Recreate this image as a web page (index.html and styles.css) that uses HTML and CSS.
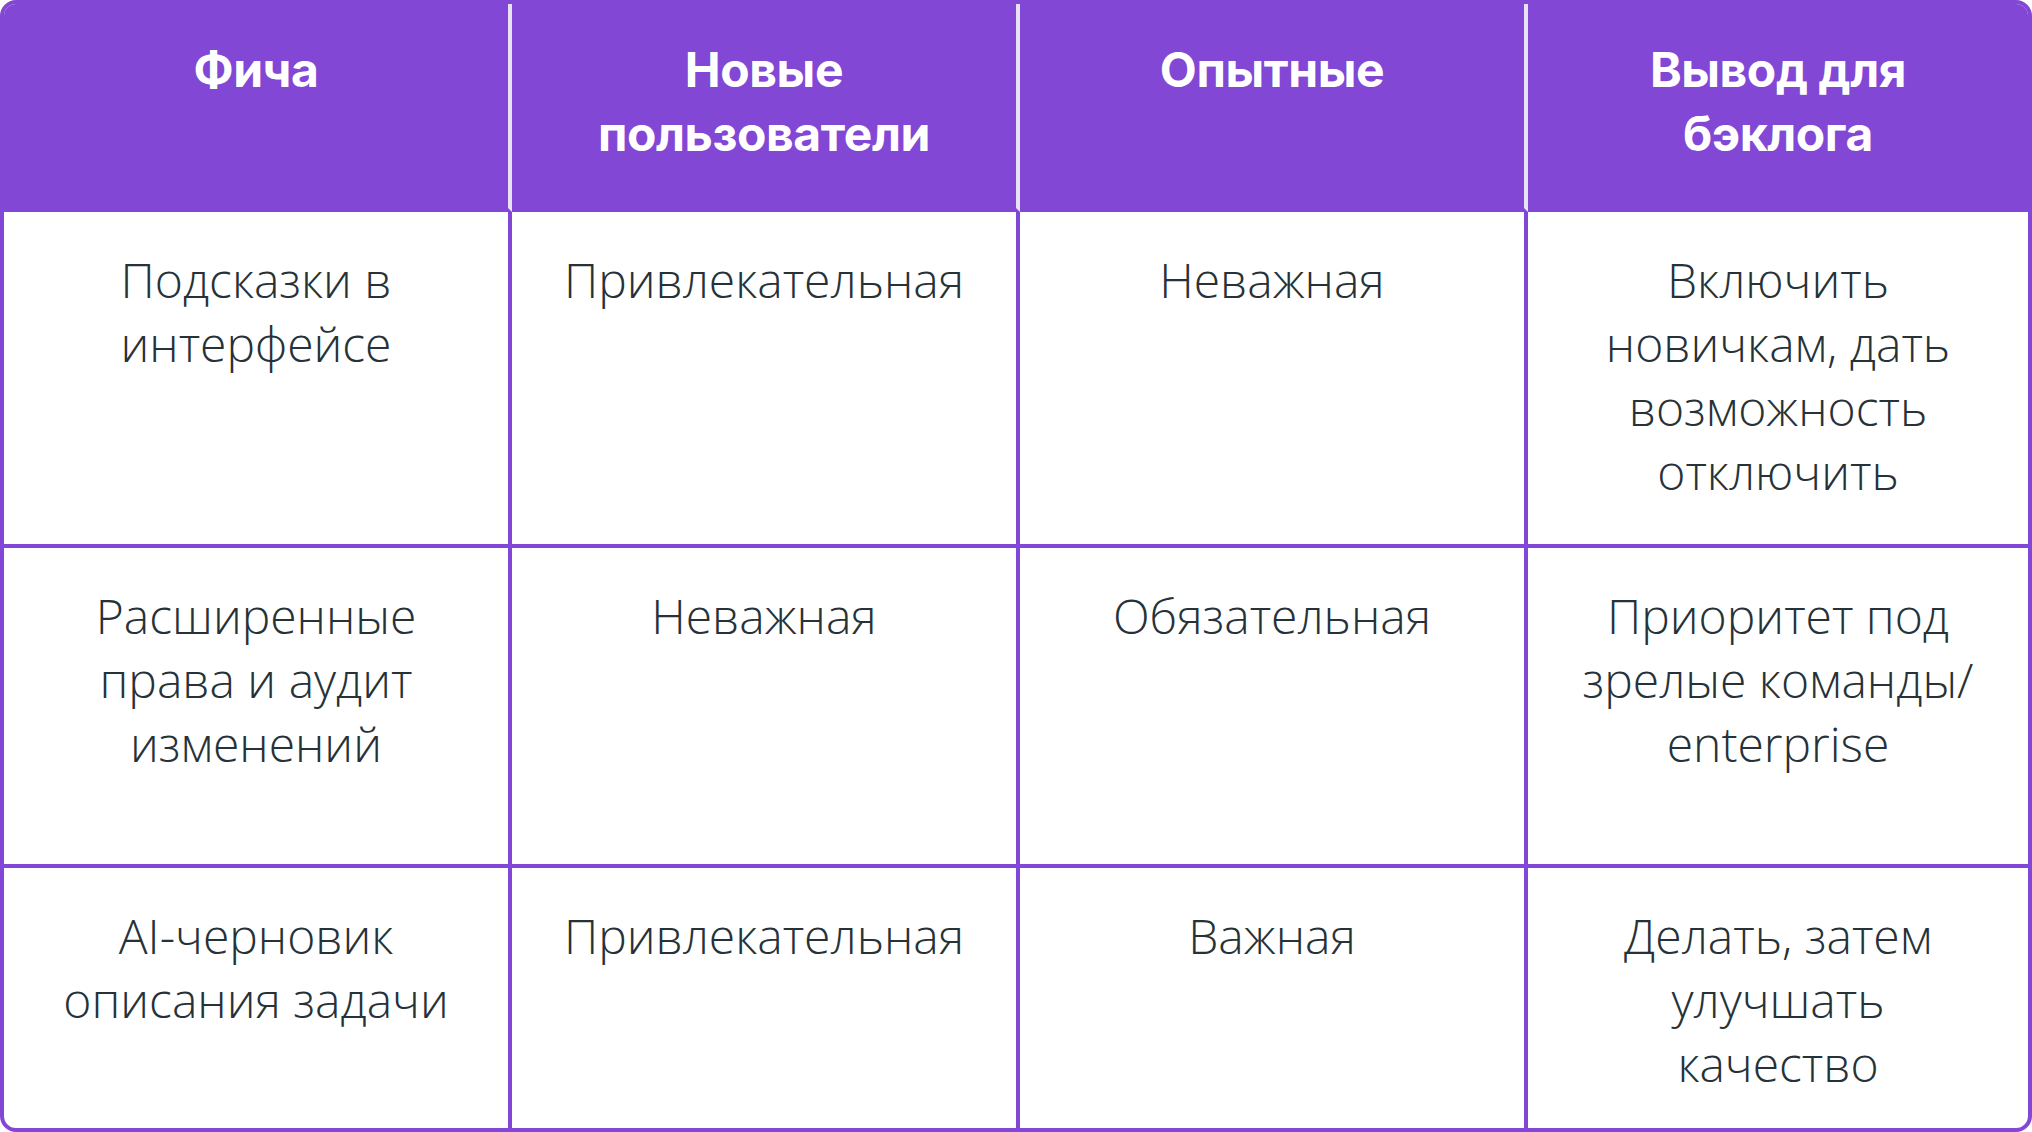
FILE: index.html
```html
<!DOCTYPE html>
<html lang="ru">
<head>
<meta charset="utf-8">
<title>Фичи</title>
<link rel="stylesheet" href="styles.css">
</head>
<body>
<div class="frame">
  <table class="kano">
    <colgroup>
      <col class="c1"><col class="c2"><col class="c3"><col class="c4">
    </colgroup>
    <thead>
      <tr class="rh">
        <th>Фича</th>
        <th>Новые<br>пользователи</th>
        <th>Опытные</th>
        <th>Вывод для<br>бэклога</th>
      </tr>
    </thead>
    <tbody>
      <tr class="r1">
        <td>Подсказки в<br>интерфейсе</td>
        <td>Привлекательная</td>
        <td>Неважная</td>
        <td>Включить<br>новичкам, дать<br>возможность<br>отключить</td>
      </tr>
      <tr class="r2">
        <td>Расширенные<br>права и аудит<br>изменений</td>
        <td>Неважная</td>
        <td>Обязательная</td>
        <td>Приоритет под<br>зрелые команды/<br>enterprise</td>
      </tr>
      <tr class="r3">
        <td>AI-черновик<br>описания задачи</td>
        <td>Привлекательная</td>
        <td>Важная</td>
        <td>Делать, затем<br>улучшать<br>качество</td>
      </tr>
    </tbody>
  </table>
</div>
</body>
</html>
```

FILE: styles.css
```css
html, body {
  margin: 0;
  padding: 0;
  background: #ffffff;
}

.frame {
  width: 2032px;
  height: 1132px;
  box-sizing: border-box;
  border: 4px solid #8247d5;
  border-radius: 16px;
  overflow: hidden;
  background: #ffffff;
}

.kano {
  width: 2024px;
  border-collapse: separate;
  border-spacing: 0;
  table-layout: fixed;
}

.c1, .c2, .c3 { width: 508px; }
.c4 { width: 500px; }

.kano th,
.kano td {
  box-sizing: border-box;
  vertical-align: top;
  text-align: center;
  padding: 36px 20px 0;
  font-size: 48px;
  line-height: 64px;
}

.kano th {
  background: #8247d5;
  color: #ffffff;
  font-family: "Inter", "Noto Sans", sans-serif;
  font-weight: 700;
  letter-spacing: -0.4px;
  border-right: 4px solid #e9e2f7;
  border-bottom: 4px solid #8247d5;
  padding-top: 34px;
}

.kano td {
  color: #263238;
  font-family: "Open Sans", "Noto Sans", sans-serif;
  font-weight: 300;
  border-right: 4px solid #8247d5;
  border-bottom: 4px solid #8247d5;
}

.kano th:last-child,
.kano td:last-child {
  border-right: none;
}

.kano tbody tr:last-child td {
  border-bottom: none;
}

.rh { height: 208px; }
.r1 { height: 336px; }
.r2 { height: 320px; }
.r3 { height: 260px; }
```
